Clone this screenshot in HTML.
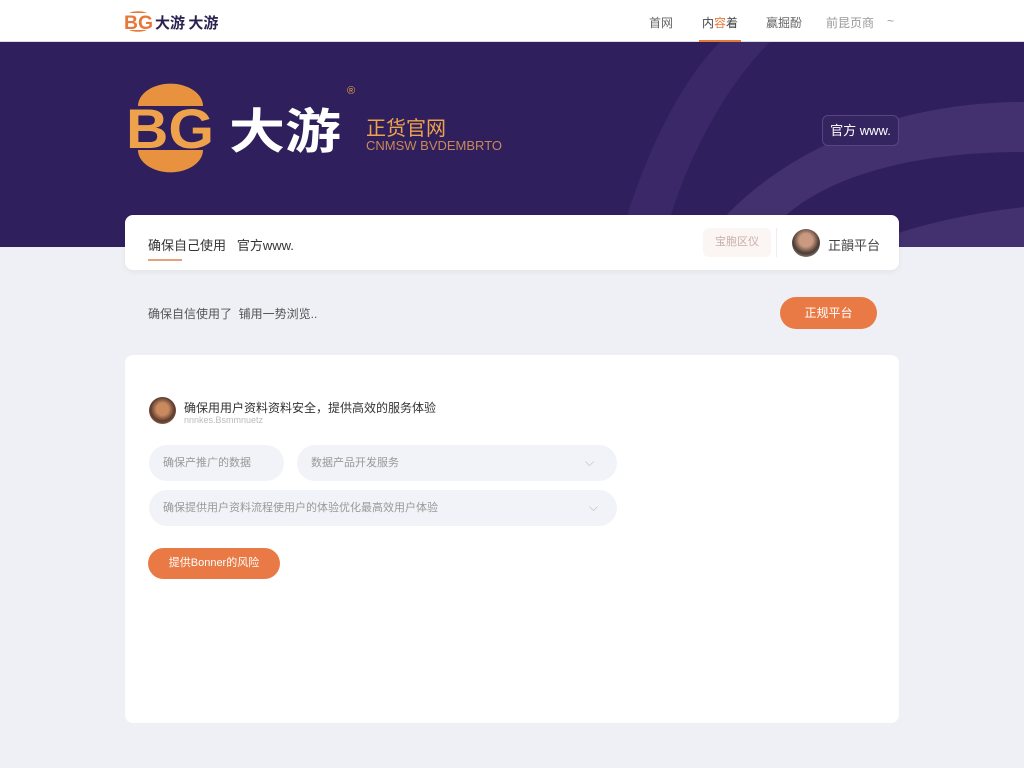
<!DOCTYPE html>
<html><head><meta charset="utf-8"><style>
*{margin:0;padding:0;box-sizing:border-box}
body{width:1024px;height:768px;overflow:hidden;background:#eef0f5;font-family:"Liberation Sans","Noto Sans CJK SC",sans-serif;position:relative}
.hdr{position:absolute;left:0;top:0;width:1024px;height:42px;background:#fff;border-bottom:1px solid #ddd}
.band{position:absolute;left:0;top:42px;width:1024px;height:205px;background:#2f1f5c;overflow:hidden}
.a{position:absolute;color:#222;white-space:nowrap}
.nav{position:absolute;top:14px;font-size:12px;color:#666}
.card{position:absolute;background:#fff;border-radius:8px}
.pill{position:absolute;background:#f2f3f8;border-radius:18px;font-size:11px;color:#999;padding-left:14px;line-height:36px}
.btn{position:absolute;background:#e97a45;color:#fff;border-radius:16px;text-align:center}
</style></head><body>
<div class="hdr">
 <svg width="120" height="42" style="position:absolute;left:120px;top:0">
  <path d="M9 13 A12 5 0 0 1 27 13Z" fill="#e8773c"/><path d="M9 30 A12 5 0 0 0 27 30Z" fill="#e8773c"/>
  <text x="4" y="29" font-family="Liberation Sans" font-weight="bold" font-size="19" fill="#e8773c" textLength="29" lengthAdjust="spacingAndGlyphs">BG</text>
  <text x="35" y="28" font-family="Noto Sans CJK SC" font-weight="bold" font-size="15" fill="#2a2150">大游 大游</text>
 </svg>
 <div class="nav" style="left:649px">首网</div>
 <div class="nav" style="left:702px;color:#444">内<span style="color:#e8773c">容</span>着</div>
 <div style="position:absolute;left:699px;top:40px;width:42px;height:2px;background:#e8773c"></div>
 <div class="nav" style="left:766px">赢掘酚</div>
 <div class="nav" style="left:826px;color:#999">前昆页商</div>
 <div class="nav" style="left:887px;color:#999">~</div>
</div>
<div class="band">
 <svg width="1024" height="205" style="position:absolute;left:0;top:0">
  <path d="M618 205 C640 120 680 40 720 0 L770 0 C720 50 680 130 662 205Z" fill="#3a2868"/>
  <path d="M700 205 C760 120 880 60 1024 60 L1024 110 C880 110 790 150 760 205Z" fill="#42306f"/>
  <path d="M860 205 C920 180 980 170 1024 165 L1024 205Z" fill="#42306f"/>
  <path d="M138 64 A32 22 0 0 1 203 64Z" fill="#e8923f"/>
  <path d="M138 108 A32 22 0 0 0 203 108Z" fill="#e8923f"/>
  <text x="126" y="106" font-family="Liberation Sans" font-weight="bold" font-size="56" fill="#eea24c" textLength="88" lengthAdjust="spacingAndGlyphs">BG</text>
  <text x="229" y="106" font-family="Noto Sans CJK SC" font-weight="bold" font-size="48" fill="#fff" textLength="112" lengthAdjust="spacingAndGlyphs">大游</text>
 </svg>
 <div class="a" style="left:347px;top:43px;font-size:11px;color:#e8a04a">®</div>
 <div class="a" style="left:366px;top:70px;font-size:20px;color:#eea24c">正货官网</div>
 <div class="a" style="left:366px;top:96px;font-size:13px;color:#c9895a">CNMSW BVDEMBRTO</div>
 <div class="a" style="left:822px;top:73px;width:77px;height:31px;border:1px solid #574582;background:#34245f;border-radius:6px;color:#fff;font-size:13px;line-height:29px;text-align:center">官方 www.</div>
</div>
<div class="card" style="left:125px;top:215px;width:774px;height:55px;box-shadow:0 2px 6px rgba(0,0,0,.05)">
 <div class="a" style="left:23px;top:20px;font-size:13px;color:#333">确保自己使用 &nbsp; 官方www.</div>
 <div style="position:absolute;left:23px;top:44px;width:34px;height:2px;background:#e8a07a"></div>
 <div style="position:absolute;left:578px;top:13px;width:68px;height:29px;background:#fbf5f3;border-radius:6px;font-size:11px;color:#c9b0a8;text-align:center;line-height:29px">宝胞区仪</div>
 <div style="position:absolute;left:651px;top:13px;width:1px;height:29px;background:#eee"></div>
 <div style="position:absolute;left:667px;top:14px;width:28px;height:28px;border-radius:50%;background:radial-gradient(circle at 50% 40%,#c99a80 30%,#4a3a35 60%,#bba 100%)"></div>
 <div class="a" style="left:703px;top:20px;font-size:13px;color:#444">正韻平台</div>
</div>
<div class="a" style="left:148px;top:305px;font-size:12px;color:#555">确保自信使用了 &nbsp;铺用一势浏览..</div>
<div class="btn" style="left:780px;top:297px;width:97px;height:32px;line-height:32px;font-size:12px">正规平台</div>
<div class="card" style="left:125px;top:355px;width:774px;height:368px">
 <div style="position:absolute;left:24px;top:42px;width:27px;height:27px;border-radius:50%;background:radial-gradient(circle at 50% 45%,#c98a60 30%,#5a3a30 60%,#e8a050 100%)"></div>
 <div class="a" style="left:59px;top:44px;font-size:12px;color:#333">确保用用户资料资料安全，提供高效的服务体验</div>
 <div class="a" style="left:59px;top:60px;font-size:9px;color:#bbb">nnnkes.Bsmmnuetz</div>
 <div class="pill" style="left:24px;top:90px;width:135px">确保产推广的数据</div>
 <div class="pill" style="left:172px;top:90px;width:320px">数据产品开发服务</div>
 <div class="a" style="left:460px;top:100px;font-size:12px;color:#bbb">⌵</div>
 <div class="pill" style="left:24px;top:135px;width:468px">确保提供用户资料流程使用户的体验优化最高效用户体验</div>
 <div class="a" style="left:464px;top:145px;font-size:12px;color:#bbb">⌵</div>
 <div class="btn" style="left:23px;top:193px;width:132px;height:31px;line-height:31px;font-size:11px">提供Bonner的风险</div>
</div>
</body></html>
